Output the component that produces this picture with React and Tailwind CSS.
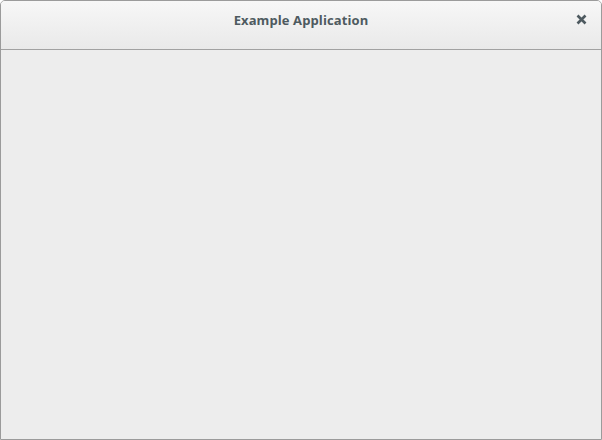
export default function App() {
  return (
    <div className="w-[602px] h-[440px] flex flex-col border border-[#9b9b9b] rounded-t-[5px] overflow-hidden bg-[#ededed]" style={{ fontFamily: '"Open Sans", "DejaVu Sans", sans-serif' }}>
      <div className="relative h-[49px] shrink-0 flex items-center justify-center bg-gradient-to-b from-[#f7f7f7] to-[#e9e9e9] border-b border-[#a1a1a1]">
        <span className="text-[13px] font-bold text-[#4e5a60] leading-none -mt-[10px] tracking-[0.1px]">Example Application</span>
        <button className="absolute right-[14px] top-[13px] w-[11px] h-[11px] flex items-center justify-center">
          <svg width="11" height="11" viewBox="0 0 11 11">
            <path d="M1.5 1.5 L9.5 9.5 M9.5 1.5 L1.5 9.5" stroke="#4e5a60" strokeWidth="2.6" strokeLinecap="butt" />
          </svg>
        </button>
      </div>
      <div className="flex-1 bg-[#ededed]" />
    </div>
  );
}
